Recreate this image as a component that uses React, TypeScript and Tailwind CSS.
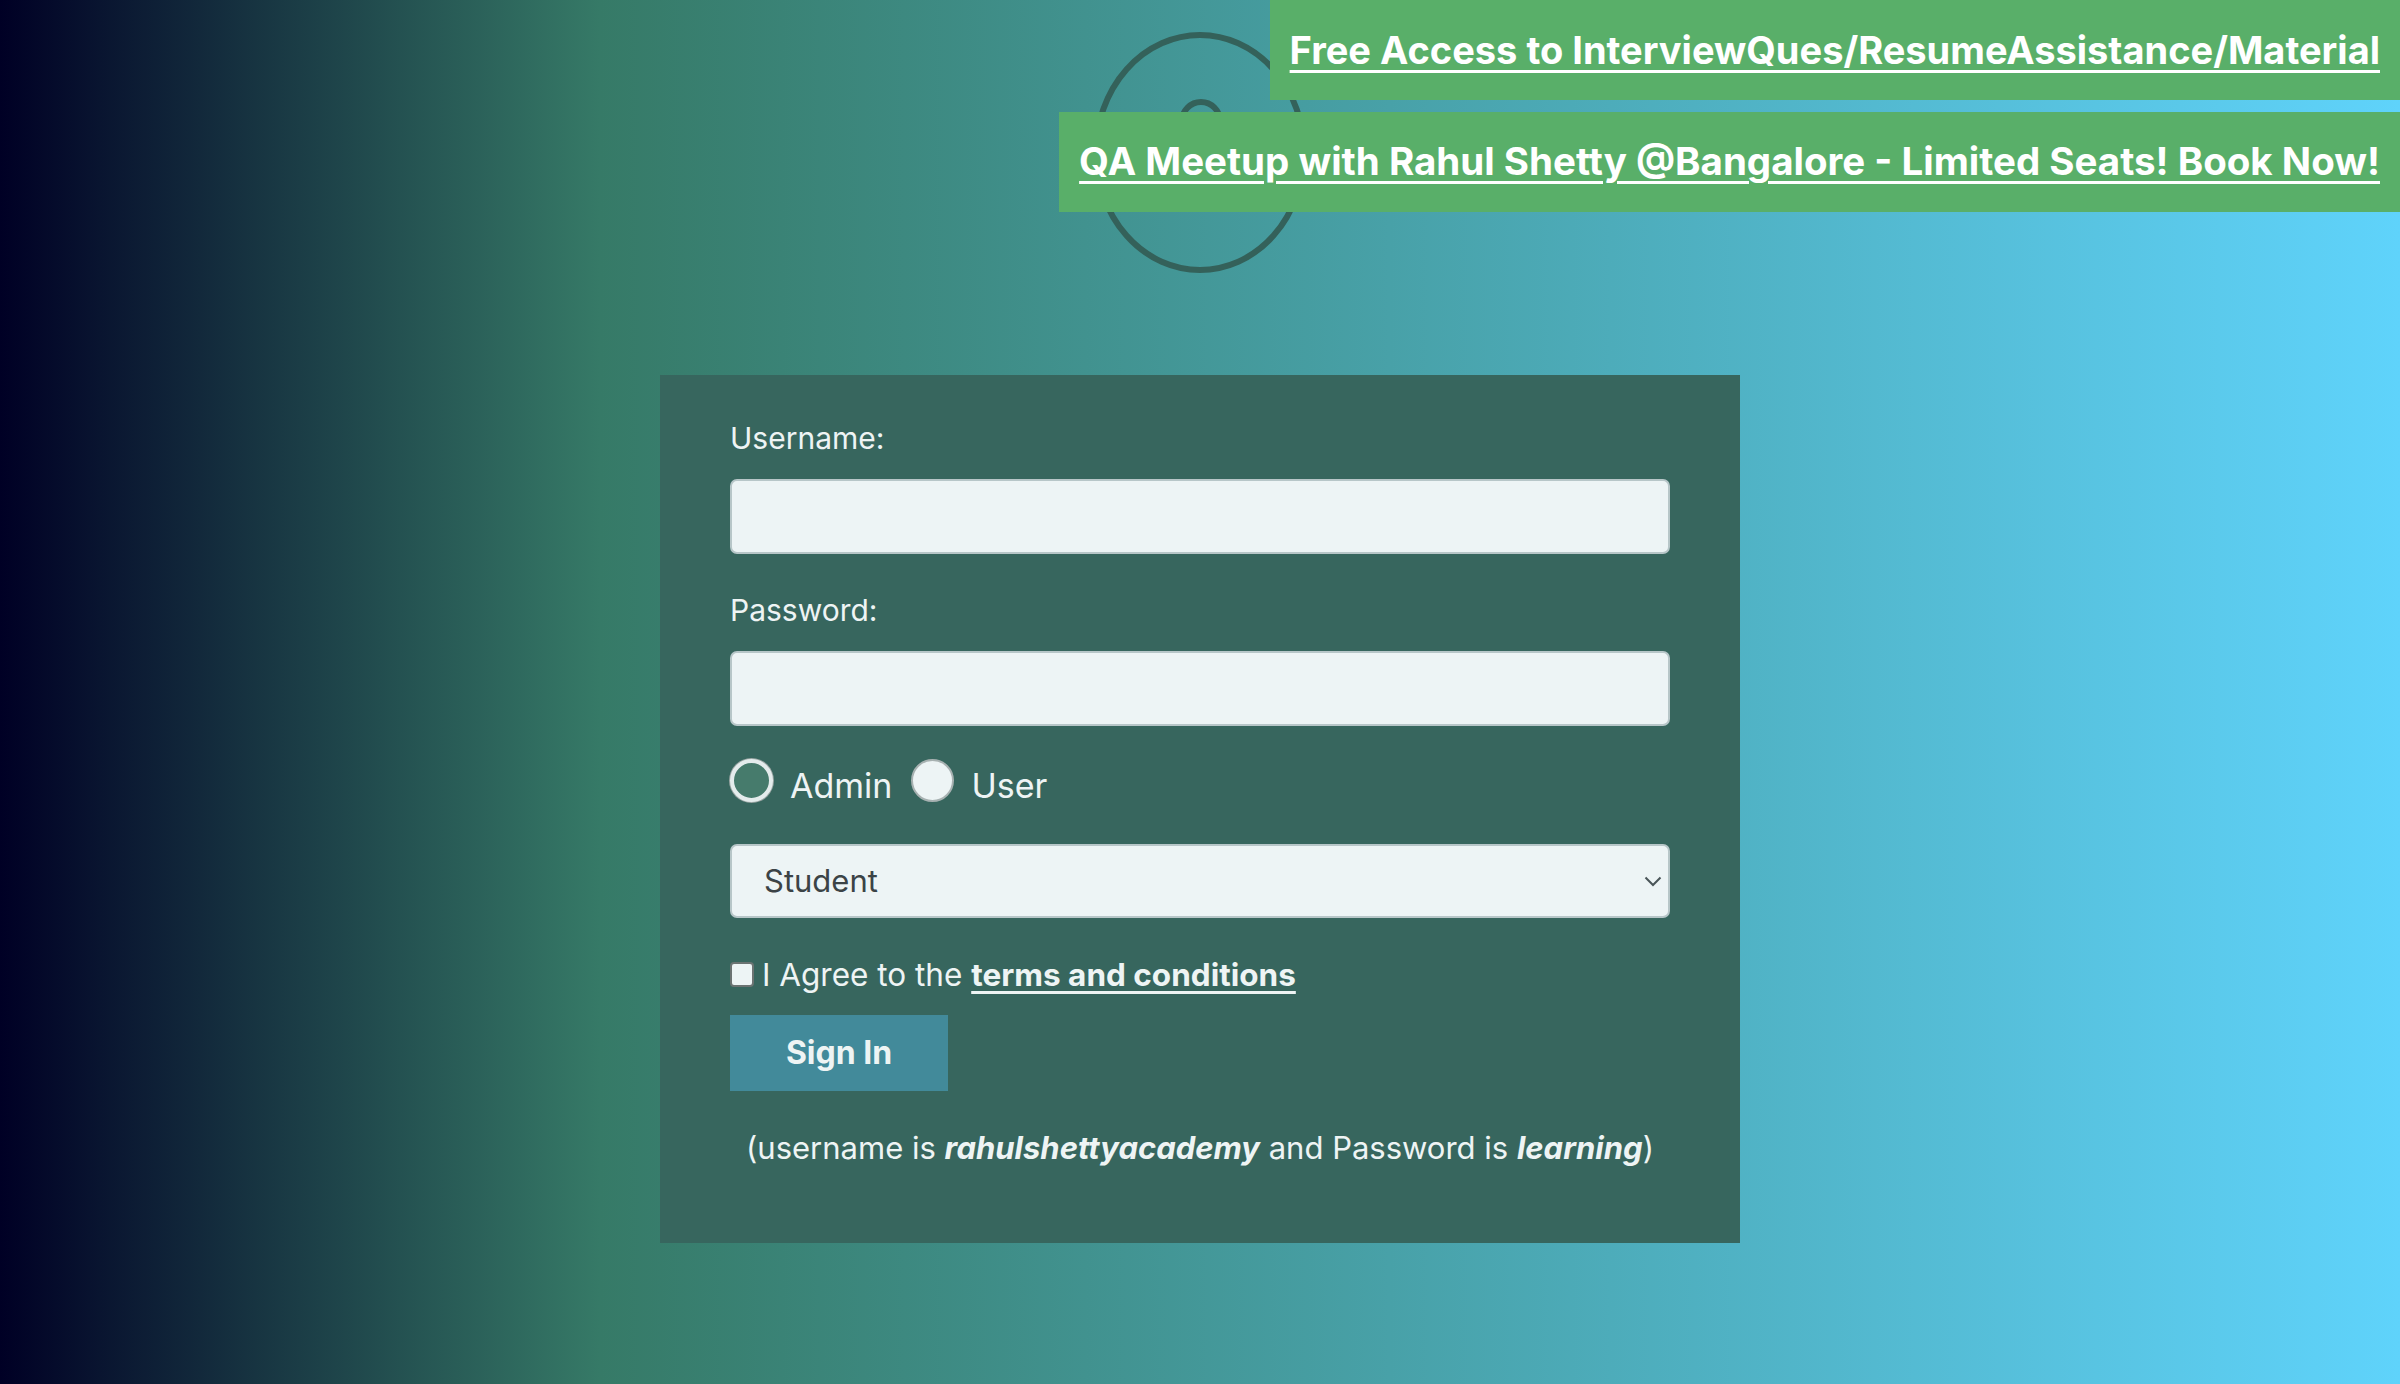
import { useState } from "react";

function Logo() {
  return (
    <svg width="214" height="241" viewBox="0 0 214 241" fill="none" aria-hidden>
      <ellipse cx="107" cy="120.5" rx="104" ry="117.5" stroke="#34615a" strokeWidth="6" />
      <circle cx="108" cy="89" r="19" stroke="#34615a" strokeWidth="6" />
      <path d="M62 168c6-28 24-44 46-44s40 16 46 44" stroke="#34615a" strokeWidth="6" strokeLinecap="round" />
    </svg>
  );
}

export default function App() {
  const [role, setRole] = useState<"admin" | "user" | null>(null);
  const [agree, setAgree] = useState(false);

  return (
    <div className="relative min-h-screen overflow-hidden bg-[linear-gradient(to_right,#000025_0%,#367a67_25%,#5fd3fb_100%)] font-['Inter','Noto_Sans',sans-serif] text-[#eef4f4]">
      {/* Promo banners */}
      <div className="absolute top-0 right-0 z-10 flex flex-col items-end gap-[12px]">
        <a href="#" className="flex h-[100px] items-center bg-[#59af69] px-[20px] text-[38px] font-bold text-white underline decoration-[3px] underline-offset-[6px]">
          Free Access to InterviewQues/ResumeAssistance/Material
        </a>
        <a href="#" className="flex h-[100px] items-center bg-[#59af69] px-[20px] text-[38.5px] font-bold text-white underline decoration-[3px] underline-offset-[6px]">
          QA Meetup with Rahul Shetty @Bangalore - Limited Seats! Book Now!
        </a>
      </div>

      {/* Logo */}
      <div className="flex justify-center pt-[32px]">
        <Logo />
      </div>

      {/* Login card */}
      <div className="mx-auto mt-[102px] w-[1080px] bg-[#37665e] px-[70px] pt-[41px] pb-[73px]">
        <label className="block text-[30px] leading-[45px]">Username:</label>
        <input
          type="text"
          className="mt-[18px] block h-[75px] w-full rounded-[7px] border-2 border-[#b7c6c8] bg-[#edf4f5] px-[20px] text-[30px] text-[#333] outline-none"
        />

        <label className="mt-[34px] block text-[30px] leading-[45px]">Password:</label>
        <input
          type="password"
          className="mt-[18px] block h-[75px] w-full rounded-[7px] border-2 border-[#b7c6c8] bg-[#edf4f5] px-[20px] text-[30px] text-[#333] outline-none"
        />

        <div className="mt-[33px] flex h-[43px] items-start">
          <button
            type="button"
            onClick={() => setRole("admin")}
            className="h-[43px] w-[43px] shrink-0 rounded-full border-[4px] border-[#e4ecec] bg-[#467b6c] shadow-[0_0_0_1px_#9aa6a4]"
          />
          <span className="ml-[17px] mt-[5px] text-[34px] leading-[43px]">Admin</span>
          <button
            type="button"
            onClick={() => setRole("user")}
            className="ml-[19px] h-[43px] w-[43px] shrink-0 rounded-full border-[2px] border-[#a7b1b1] bg-[#edf4f5]"
          />
          <span className="ml-[17px] mt-[5px] text-[34px] leading-[43px]">User</span>
          {role && <span className="sr-only">{role}</span>}
        </div>

        <div className="relative mt-[42px] h-[74px] w-full rounded-[7px] border-2 border-[#b7c6c8] bg-[#edf4f5]">
          <div className="flex h-full items-center pl-[32px] text-[31px] text-[#3b4346]">Student</div>
          <svg className="absolute right-[6px] top-[30px]" width="18" height="11" viewBox="0 0 18 11" fill="none" aria-hidden>
            <path d="M1.5 1.5l7.5 7.5 7.5-7.5" stroke="#4a5558" strokeWidth="2" />
          </svg>
        </div>

        <div className="mt-[34px] flex h-[45px] items-center gap-[8px]">
          <button
            type="button"
            onClick={() => setAgree(!agree)}
            className="h-[25px] w-[24px] shrink-0 rounded-[4px] border-2 border-[#6b7372] bg-[#edf4f5]"
          />
          <span className="text-[31.5px] leading-[45px]">
            I Agree to the{" "}
            <a href="#" className="font-bold underline decoration-[3px] underline-offset-[5px]">
              terms and conditions
            </a>
          </span>
          {agree && <span className="sr-only">agreed</span>}
        </div>

        <button
          type="button"
          className="mt-[18px] flex h-[76px] w-[218px] items-center justify-center bg-[#428a9a] text-[32px] font-bold text-[#eef4f4]"
        >
          Sign In
        </button>

        <p className="mt-[34px] text-center text-[31px] leading-[45px]">
          (username is <b className="italic">rahulshettyacademy</b> and Password is <b className="italic">learning</b>)
        </p>
      </div>
    </div>
  );
}
